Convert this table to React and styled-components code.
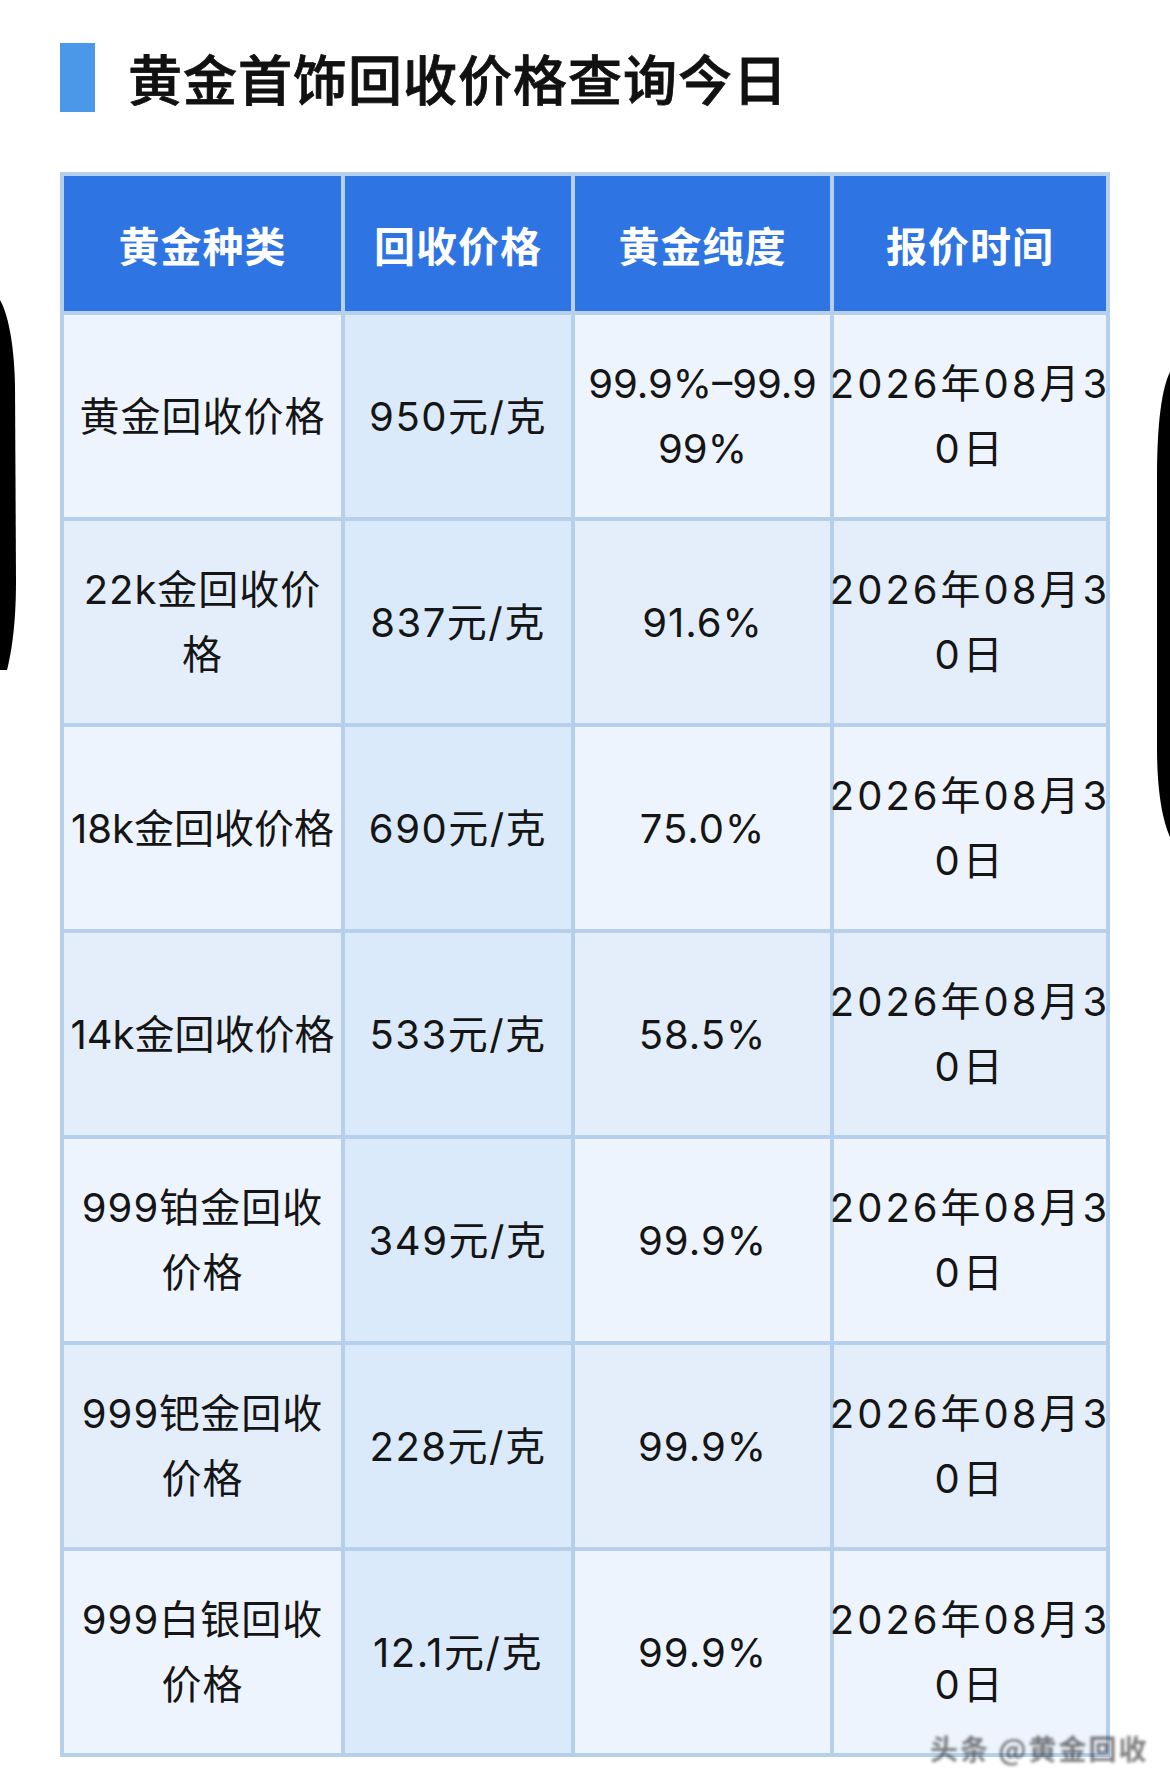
import styled, { createGlobalStyle } from "styled-components";

const GlobalStyle = createGlobalStyle`
  html, body {
    margin: 0;
    padding: 0;
    background: #ffffff;
  }

  body {
    font-family: "Inter", "Noto Sans CJK SC", sans-serif;
    color: #111111;
  }
`;

const Page = styled.div`
  position: relative;
  width: 1170px;
  min-height: 1787px;
  box-sizing: border-box;
  padding: 43px 0 0 60px;
  overflow: hidden;
`;

const TitleRow = styled.div`
  display: flex;
  align-items: center;
  gap: 33px;
  height: 69px;
`;

const TitleBar = styled.span`
  width: 35px;
  height: 69px;
  background: #4b98e8;
`;

const Title = styled.h1`
  margin: 0;
  font-family: "Noto Sans CJK SC", sans-serif;
  font-size: 54px;
  font-weight: 500;
  letter-spacing: 1px;
  color: #111111;
  line-height: 1;
  -webkit-text-stroke: 0.8px #111111;
`;

const Table = styled.div`
  display: grid;
  grid-template-columns: 277px 226px 255px 272px;
  grid-template-rows: 135px repeat(7, 202px);
  gap: 4px;
  padding: 4px;
  width: max-content;
  margin-top: 60px;
  background: #b6cfea;
`;

const HeadCell = styled.div`
  display: flex;
  align-items: center;
  justify-content: center;
  background: #2e75e3;
  color: #ffffff;
  font-family: "Noto Sans CJK SC", sans-serif;
  font-size: 41px;
  font-weight: 700;
  letter-spacing: 1px;
`;

const spacing = { name: "1px", tight: "0", price: "1.5px", date: "3px" };

const Cell = styled.div`
  display: flex;
  align-items: center;
  justify-content: center;
  text-align: center;
  white-space: pre;
  font-size: 40px;
  line-height: 65px;
  letter-spacing: ${({ $space }) => spacing[$space] || "1px"};
  color: #151515;
  background: ${({ $price, $alt }) =>
    $price ? "#dbeafb" : $alt ? "#e4eefa" : "#edf4fd"};
`;

const Edge = styled.svg`
  position: absolute;
  top: ${({ $top }) => $top}px;
  ${({ $side }) => ($side === "left" ? "left: 0;" : "right: 0;")}
`;

const Watermark = styled.span`
  position: absolute;
  left: 930px;
  top: 1728px;
  white-space: nowrap;
  font-family: "Noto Sans CJK SC", sans-serif;
  font-size: 28px;
  font-weight: 700;
  letter-spacing: 2px;
  color: rgba(20, 20, 20, 0.55);
  filter: blur(1.4px);
`;

const headers = ["黄金种类", "回收价格", "黄金纯度", "报价时间"];

const date = "2026年08月3\n0日";

const rows = [
  { name: "黄金回收价格", price: "950元/克", purity: "99.9%–99.9\n99%" },
  { name: "22k金回收价\n格", price: "837元/克", purity: "91.6%" },
  { name: "18k金回收价格", price: "690元/克", purity: "75.0%", tight: true },
  { name: "14k金回收价格", price: "533元/克", purity: "58.5%", tight: true },
  { name: "999铂金回收\n价格", price: "349元/克", purity: "99.9%" },
  { name: "999钯金回收\n价格", price: "228元/克", purity: "99.9%" },
  { name: "999白银回收\n价格", price: "12.1元/克", purity: "99.9%" },
];

const App = () => {
  return (
    <>
      <GlobalStyle />
      <Page>
        <TitleRow>
          <TitleBar />
          <Title>黄金首饰回收价格查询今日</Title>
        </TitleRow>

        <Table>
          {headers.map((h) => (
            <HeadCell key={h}>{h}</HeadCell>
          ))}
          {rows.map((row, i) => {
            const alt = i % 2 === 1;
            return [
              <Cell key={`n${i}`} $alt={alt} $space={row.tight ? "tight" : "name"}>
                {row.name}
              </Cell>,
              <Cell key={`p${i}`} $alt={alt} $price $space="price">
                {row.price}
              </Cell>,
              <Cell key={`u${i}`} $alt={alt} $space={i === 0 ? "tight" : "name"}>
                {row.purity}
              </Cell>,
              <Cell key={`d${i}`} $alt={alt} $space="date">
                {date}
              </Cell>,
            ];
          })}
        </Table>

        <Edge $side="left" $top={300} width="18" height="370" viewBox="0 0 18 370">
          <path d="M0 0 C7 12 14 40 15 85 L16 280 C16 322 12 350 7 370 L0 370 Z" fill="#000" />
        </Edge>
        <Edge $side="right" $top={372} width="15" height="465" viewBox="0 0 15 465">
          <path d="M15 0 C7 16 2 50 2 105 L2 375 C2 418 7 447 15 465 Z" fill="#000" />
        </Edge>

        <Watermark>头条 @黄金回收</Watermark>
      </Page>
    </>
  );
};

export default App;
